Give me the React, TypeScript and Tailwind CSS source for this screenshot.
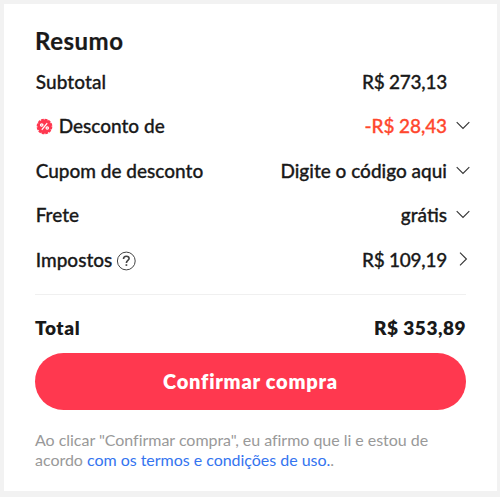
import type { ReactNode } from "react";

type Row = {
	label: string;
	labelClass?: string;
	value: string;
	valueClass?: string;
	arrow?: "down" | "right";
	before?: ReactNode;
	after?: ReactNode;
};

const rows: Row[] = [
	{
		label: "Subtotal",
		labelClass: "tracking-[0.1px]",
		value: "R$ 273,13",
		valueClass: "tracking-[-0.25px]",
	},
	{
		label: "Desconto de",
		value: "-R$ 28,43",
		valueClass: "tracking-[-0.1px] text-[#ff472e]",
		arrow: "down",
		before: <DiscountBadge />,
	},
	{
		label: "Cupom de desconto",
		value: "Digite o código aqui",
		arrow: "down",
	},
	{ label: "Frete", value: "grátis", arrow: "down" },
	{
		label: "Impostos",
		value: "R$ 109,19",
		valueClass: "tracking-[-0.25px]",
		arrow: "right",
		after: <HelpIcon />,
	},
];

function DiscountBadge() {
	return (
		<svg viewBox="0 0 16 16" className="mt-px mr-1.5 size-[17px] shrink-0">
			<circle
				cx="8"
				cy="8"
				r="6.6"
				fill="#ff3850"
				stroke="#ff3850"
				strokeWidth="1.6"
				strokeDasharray="2.6 0.856"
			/>
			<g fill="none" stroke="#fff" strokeWidth="1.2" strokeLinecap="round">
				<path d="M10.2 5.2 5.8 10.8" />
				<circle cx="5.4" cy="6.6" r="1.1" />
				<circle cx="10.6" cy="9.4" r="1.1" />
			</g>
		</svg>
	);
}

function HelpIcon() {
	return (
		<svg
			viewBox="0 0 20 20"
			fill="none"
			stroke="#444"
			className="mt-0.5 ml-1 size-5 shrink-0"
		>
			<circle cx="10.3" cy="10" r="8.9" strokeWidth="1" />
			<path
				d="M7.5 7.9C7.5 6.1 8.7 5.2 10.3 5.2s2.8.9 2.8 2.4c0 1.9-2.7 1.9-2.7 4.3"
				strokeWidth="1.6"
			/>
			<path d="M10.4 13.2v1.7" strokeWidth="1.7" />
		</svg>
	);
}

function Arrow({ direction }: { direction: "down" | "right" }) {
	return (
		<svg
			viewBox="0 0 16 16"
			fill="none"
			stroke="#333"
			strokeWidth="1.1"
			className="size-4"
		>
			<path
				d={
					direction === "down"
						? "M1.7 4.2 8 10.5 14.3 4.2"
						: "M5 .7 11.4 7 5 13.3"
				}
			/>
		</svg>
	);
}

function SummaryRow({ row }: { row: Row }) {
	return (
		<div className="flex h-[44.6px] items-center justify-between">
			<div className="flex items-center pl-[0.7px]">
				{row.before}
				<span className={row.labelClass}>{row.label}</span>
				{row.after}
			</div>
			<div className="-mr-[5px] flex items-center">
				<span className={row.valueClass}>{row.value}</span>
				<div className="ml-2 size-4">
					{row.arrow && <Arrow direction={row.arrow} />}
				</div>
			</div>
		</div>
	);
}

export default function App() {
	return (
		<div className="h-[497px] w-[500px] bg-[#f2f2f2] pt-1 pl-1 font-['Lato',sans-serif] text-[#191919]">
			<section className="h-[487px] w-[493px] bg-white pt-[19px] pr-[31px] pl-[31px]">
				<h2 className="h-9 text-2xl leading-9 font-bold tracking-[0.5px] [-webkit-text-stroke:0.2px]">
					Resumo
				</h2>
				<div className="pt-[0.4px] text-[19px] leading-6 font-medium [-webkit-text-stroke:0.3px]">
					{rows.map((row) => (
						<SummaryRow key={row.label} row={row} />
					))}
				</div>
				<div className="mt-[11.6px] h-px bg-[#f0f0f0]" />
				<div className="mt-[21px] flex h-6 items-center justify-between text-[19px] font-extrabold">
					<span className="tracking-[0.6px]">Total</span>
					<span className="tracking-[0.5px]">R$ 353,89</span>
				</div>
				<button
					type="button"
					className="mt-[13px] flex h-[57px] w-[431px] items-center justify-center rounded-full bg-[#ff384f] text-xl font-extrabold tracking-[0.75px] text-white"
				>
					Confirmar compra
				</button>
				<p className="mt-[20px] text-base leading-5 tracking-[-0.03px] whitespace-nowrap text-[#999]">
					Ao clicar "Confirmar compra", eu afirmo que li e estou de
					<br />
					acordo{" "}
					<a href="#" className="text-[#3474f0]">
						com os termos e condições de uso.
					</a>
					.
				</p>
			</section>
		</div>
	);
}
